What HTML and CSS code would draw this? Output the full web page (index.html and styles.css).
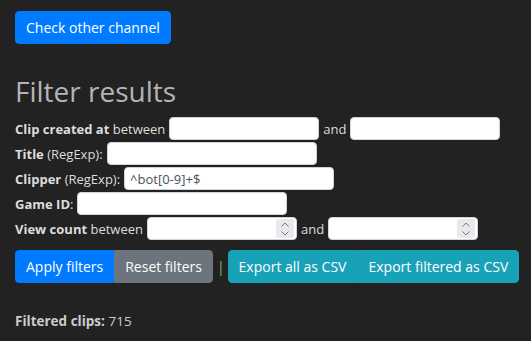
FILE: index.html
```html
<!DOCTYPE html>
<html lang="en">
<head>
    <meta charset="UTF-8">
    <title>Clips</title>
    <link rel="stylesheet" href="styles.css">
</head>
<body>
    <div class="container">
        <button class="btn btn-primary top-button">Check other channel</button>

        <h2 class="section-title">Filter results</h2>

        <div class="filter-row">
            <b>Clip created at</b>&nbsp;between
            <input class="field" type="text">
            <span class="word">and</span>
            <input class="field" type="text">
        </div>
        <div class="filter-row">
            <b>Title</b>&nbsp;(RegExp):
            <input class="field wide" type="text">
        </div>
        <div class="filter-row">
            <b>Clipper</b>&nbsp;(RegExp):
            <input class="field wide" type="text" value="^bot[0-9]+$">
        </div>
        <div class="filter-row">
            <b>Game ID</b>:
            <input class="field wide" type="text">
        </div>
        <div class="filter-row">
            <b>View count</b>&nbsp;between
            <span class="field number-field">
                <input type="text">
                <span class="spinner">
                    <svg width="10" height="16" viewBox="0 0 10 16"><path d="M1.5 5.5 L5 2 L8.5 5.5 M1.5 10.5 L5 14 L8.5 10.5" fill="none" stroke="#7a7a7a" stroke-width="1"/></svg>
                </span>
            </span>
            <span class="word">and</span>
            <span class="field number-field">
                <input type="text">
                <span class="spinner">
                    <svg width="10" height="16" viewBox="0 0 10 16"><path d="M1.5 5.5 L5 2 L8.5 5.5 M1.5 10.5 L5 14 L8.5 10.5" fill="none" stroke="#7a7a7a" stroke-width="1"/></svg>
                </span>
            </span>
        </div>

        <div class="actions">
            <div class="btn-group">
                <button class="btn btn-primary">Apply filters</button>
                <button class="btn btn-secondary">Reset filters</button>
            </div>
            <span class="divider">|</span>
            <div class="btn-group">
                <button class="btn btn-info">Export all as CSV</button>
                <button class="btn btn-info">Export filtered as CSV</button>
            </div>
        </div>

        <p class="summary"><b>Filtered clips:</b> 715</p>
    </div>
</body>
</html>
```

FILE: styles.css
```css
body {
    font-family: 'Open Sans', 'Noto Sans', sans-serif;
    background-color: #222222;
    color: #dddddd;
    margin: 0;
    padding: 0;
}
.container {
    padding: 11px 15px;
}
.btn {
    flex-shrink: 0;
    font-family: inherit;
    font-size: 14px;
    line-height: 21px;
    padding: 5px 10px;
    border: 1px solid transparent;
    border-radius: 4px;
    color: #fff;
    white-space: nowrap;
    cursor: pointer;
}
.btn-primary {
    background-color: #007bff;
    border-color: #007bff;
}
.btn-secondary {
    background-color: #6c757d;
    border-color: #6c757d;
}
.btn-info {
    background-color: #17a2b8;
    border-color: #17a2b8;
}
.top-button {
    display: block;
}
.section-title {
    margin: 30px 0 8px;
    font-size: 28px;
    font-weight: 400;
    line-height: 34px;
    color: #b4b4b4;
}
.filter-row {
    display: flex;
    align-items: center;
    height: 25px;
    font-size: 13px;
    white-space: nowrap;
}
.filter-row b {
    font-weight: 700;
}
.field {
    box-sizing: border-box;
    width: 150px;
    height: 23px;
    margin-left: 4px;
    padding: 1px 5px;
    font-family: inherit;
    font-size: 13px;
    color: #495057;
    background: #fff;
    border: 1px solid #ced4da;
    border-radius: 4px;
}
.field.wide {
    width: 210px;
}
.word {
    margin-left: 4px;
}
.number-field {
    display: flex;
    align-items: center;
    padding: 1px 2px 1px 5px;
}
.number-field input {
    flex: 1;
    min-width: 0;
    border: none;
    outline: none;
    padding: 0;
    font-family: inherit;
    font-size: 13px;
}
.spinner {
    display: flex;
    align-items: center;
    justify-content: center;
    width: 18px;
    height: 19px;
    background: #e9e9ed;
    border-radius: 2px;
}
.actions {
    display: flex;
    align-items: center;
    margin-top: 9px;
}
.btn-group {
    display: flex;
}
.btn-group .btn:not(:first-child) {
    border-top-left-radius: 0;
    border-bottom-left-radius: 0;
}
.btn-group .btn:not(:last-child) {
    border-top-right-radius: 0;
    border-bottom-right-radius: 0;
}
.divider {
    margin: 0 3px 0 4px;
    color: #7fb87f;
    font-size: 14px;
}
.summary {
    margin: 29px 0 0;
    font-size: 13.5px;
    color: #cccccc;
}
```
